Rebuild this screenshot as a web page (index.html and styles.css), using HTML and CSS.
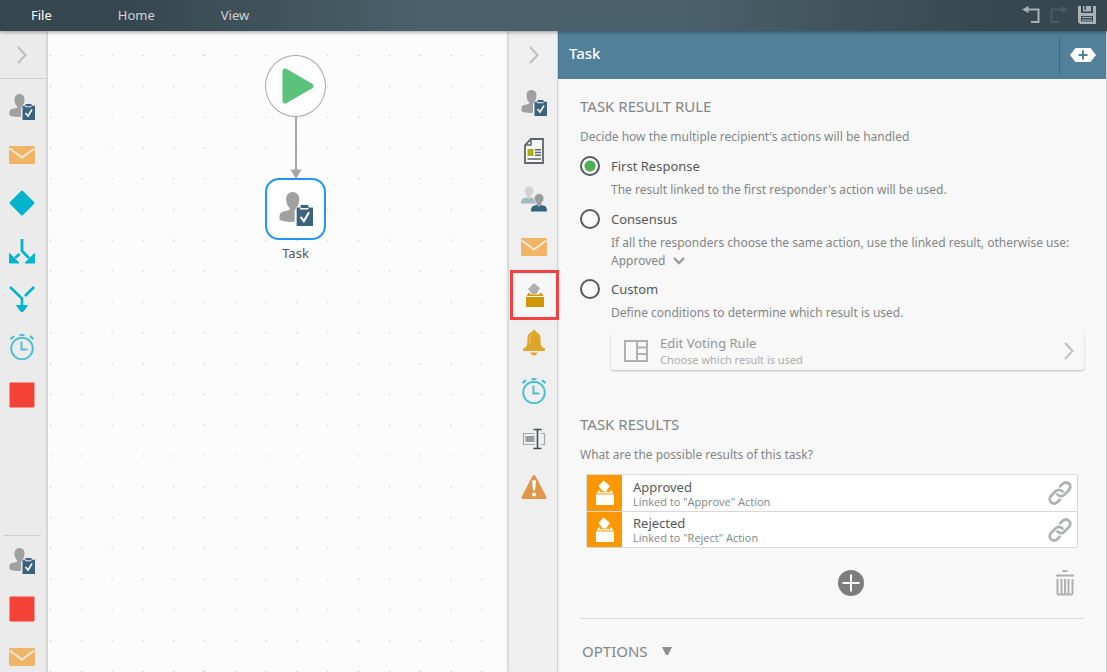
FILE: index.html
```html
<!DOCTYPE html>
<html lang="en">
<head>
    <meta charset="UTF-8">
    <meta name="viewport" content="width=device-width, initial-scale=1.0">
    <title>Workflow Designer</title>
    <link rel="stylesheet" href="styles.css">
</head>
<body>
    <!-- Shared icons -->
    <svg class="sprite" aria-hidden="true">
        <symbol id="i-chevron" viewBox="0 0 10 18">
            <path d="M1 1l7.500 8L1 17" fill="none" stroke="#bebebe" stroke-width="2"/>
        </symbol>
        <symbol id="i-task" viewBox="0 0 26 26">
            <path d="M10.500 0c3 0 5 2.200 5 5.500 0 2.800-1 5.400-2.700 6.900v1.200h-.8v9.200C7.500 23.200 3 22.600.500 21.300c-.4-3.600.1-5.400 2.300-6.200 2-.7 4.200-.9 5.400-1.700v-1C6.500 11 5.500 8.300 5.500 5.500c0-3.300 2-5.500 5-5.500z" fill="#9fa1a1"/>
            <path d="M13.500 11.800h2.500v1.500h6.500v-1.500H26V26H13.500zM16.500 10h6v2.300h-6z" fill="#3a6380"/>
            <path d="M16.500 19l2.500 3.200 4-6.700" fill="none" stroke="#fff" stroke-width="1.600"/>
        </symbol>
        <symbol id="i-mail" viewBox="0 0 26 20">
            <rect x="0" y="1" width="26" height="18" rx="1" fill="#efb465"/>
            <path d="M.5 3.500l12.500 9L25.500 3.500" fill="none" stroke="#f6ead8" stroke-width="2"/>
        </symbol>
        <symbol id="i-clock" viewBox="0 0 26 26">
            <g fill="none" stroke="#4fc0d3">
                <circle cx="13" cy="14.500" r="10.800" stroke-width="2"/>
                <path d="M12.500 7.500v8h6" stroke-width="2"/>
                <path d="M10.500 1h5" stroke-width="2"/>
                <path d="M1.500 5.200L5 2.200M24.500 5.200L21 2.200" stroke-width="2.400"/>
            </g>
        </symbol>
        <symbol id="i-stop" viewBox="0 0 26 26">
            <rect x=".5" y=".5" width="25" height="25" rx="1" fill="#f44336"/>
        </symbol>
        <symbol id="i-vote" viewBox="0 0 20 26">
            <path d="M8.500.5l6.500 5.500-3.500 4.500 1 1H8L3.500 6z" fill="#fff"/>
            <path d="M3.500 10.500L1.500 13.500h17l-2-3h-2l1 1.800H4.600l1-1.800z" fill="#fff"/>
            <rect x="1" y="14.500" width="18" height="10.500" rx=".5" fill="#fff"/>
        </symbol>
        <symbol id="i-link" viewBox="0 0 24 24">
            <g fill="none" stroke="#b0b2b2" stroke-width="2.800" stroke-linecap="round">
                <path d="M9.500 13.500a4.300 4.300 0 0 0 6.500.4l5-5a4.300 4.300 0 0 0-6.200-6.100l-2.600 2.500"/>
                <path d="M14.500 10.500a4.300 4.300 0 0 0-6.500-.4l-5 5a4.300 4.300 0 0 0 6.200 6.100l2.600-2.500"/>
            </g>
        </symbol>
    </svg>

    <header class="topbar">
        <nav class="menu">
            <a class="active" href="#">File</a>
            <a href="#">Home</a>
            <a href="#">View</a>
        </nav>
        <div class="tools">
            <button type="button" aria-label="Undo">
                <svg width="18" height="18" viewBox="0 0 18 18"><path d="M4 3.500h12.500v12.500H9" fill="none" stroke="#a9b1b5" stroke-width="2"/><path d="M0 3.500L6.500 0v7z" fill="#a9b1b5"/></svg>
            </button>
            <button type="button" aria-label="Redo" disabled>
                <svg width="18" height="18" viewBox="0 0 18 18"><path d="M14 3.500H1.500v12.500H9" fill="none" stroke="#4d5c64" stroke-width="2"/><path d="M18 3.500L11.500 0v7z" fill="#4d5c64"/></svg>
            </button>
            <button type="button" aria-label="Save">
                <svg width="18" height="18" viewBox="0 0 18 18"><path d="M0 0h3v7h12V0h3v18H2l-2-2z" fill="#a9b1b5"/><path d="M5 0h8v5.500H5z" fill="#a9b1b5"/><path d="M6.500 0h1.500v4H6.500z" fill="#39484f"/><path d="M3 10h12v5.500H3z" fill="#39484f"/><path d="M4 11.500h10M4 14h10" stroke="#a9b1b5"/></svg>
            </button>
        </div>
    </header>

    <main class="workspace">
        <!-- Step palette -->
        <aside class="rail palette">
            <button class="rail-btn collapse" type="button" aria-label="Expand"><svg width="10" height="18"><use href="#i-chevron"/></svg></button>
            <div class="palette-list">
                <button class="rail-btn" type="button" aria-label="Task"><svg width="26" height="26"><use href="#i-task"/></svg></button>
                <button class="rail-btn" type="button" aria-label="Email"><svg width="26" height="20"><use href="#i-mail"/></svg></button>
                <button class="rail-btn" type="button" aria-label="Decision">
                    <svg width="26" height="26" viewBox="0 0 26 26"><path d="M12 1q1-1 2 0l11 11q1 1 0 2L14 25q-1 1-2 0L1 14q-1-1 0-2z" fill="#00b5cc"/></svg>
                </button>
                <button class="rail-btn" type="button" aria-label="Split">
                    <svg width="26" height="26" viewBox="0 0 26 26"><path d="M13 1v12l7 7M10.500 16L6 20" fill="none" stroke="#00b5cc" stroke-width="2.800"/><path d="M.5 15.500L10 25H.5zM25.500 15.500L16 25h9.500z" fill="#00b5cc" stroke="#00b5cc" stroke-linejoin="round"/></svg>
                </button>
                <button class="rail-btn" type="button" aria-label="Merge">
                    <svg width="26" height="28" viewBox="0 0 26 28"><path d="M1 2l12 11.500V22M25 2l-9 9" fill="none" stroke="#00b5cc" stroke-width="2.600"/><path d="M7.500 20.500h11L14 26.500h-2z" fill="#00b5cc" stroke="#00b5cc" stroke-linejoin="round"/></svg>
                </button>
                <button class="rail-btn" type="button" aria-label="Timer"><svg width="26" height="26"><use href="#i-clock"/></svg></button>
                <button class="rail-btn" type="button" aria-label="End"><svg width="26" height="26"><use href="#i-stop"/></svg></button>
            </div>
            <div class="palette-recent">
                <button class="rail-btn" type="button" aria-label="Recent task"><svg width="26" height="26"><use href="#i-task"/></svg></button>
                <button class="rail-btn" type="button" aria-label="Recent end"><svg width="26" height="26"><use href="#i-stop"/></svg></button>
                <button class="rail-btn" type="button" aria-label="Recent email"><svg width="26" height="20"><use href="#i-mail"/></svg></button>
            </div>
        </aside>

        <!-- Diagram -->
        <section class="canvas">
            <svg class="grid" aria-hidden="true">
                <defs>
                    <pattern id="dots" width="40" height="40" patternUnits="userSpaceOnUse" patternTransform="translate(2 24) scale(.77)">
                        <rect width="1.500" height="1.500" fill="#bdbdbd"/>
                    </pattern>
                </defs>
                <rect width="100%" height="100%" fill="url(#dots)"/>
            </svg>
            <div class="node start">
                <svg width="32" height="36" viewBox="0 0 32 36"><path d="M3 3v30L29 18z" fill="#5bc27c" stroke="#5bc27c" stroke-width="5" stroke-linejoin="round"/></svg>
            </div>
            <svg class="arrow" width="12" height="62" viewBox="0 0 12 62"><path d="M6 0v54" stroke="#a6a6a6" stroke-width="2"/><path d="M.5 52.500h11L6 62z" fill="#a6a6a6"/></svg>
            <div class="node task">
                <svg width="34" height="36" viewBox="0 0 26 26"><use href="#i-task" width="26" height="26"/></svg>
            </div>
            <div class="node-label">Task</div>
        </section>

        <!-- Property tabs -->
        <aside class="rail tabs">
            <button class="rail-btn" type="button" aria-label="Collapse"><svg width="10" height="18"><use href="#i-chevron"/></svg></button>
            <button class="rail-btn" type="button" aria-label="General"><svg width="26" height="26"><use href="#i-task"/></svg></button>
            <button class="rail-btn" type="button" aria-label="Form">
                <svg width="20" height="26" viewBox="0 0 20 26"><path d="M7 1h12v24H1V7z" fill="#fafafa" stroke="#5e6668" stroke-width="1.800"/><path d="M7 1v6H1" fill="none" stroke="#5e6668" stroke-width="1.500"/><rect x="3.500" y="11" width="6" height="7" fill="#b0ad1c"/><path d="M11 11.800h6M11 14.500h6M11 17.200h6M3.500 21h13.500" stroke="#5e6668" stroke-width="1.600"/></svg>
            </button>
            <button class="rail-btn" type="button" aria-label="Recipients">
                <svg width="26" height="26" viewBox="0 0 26 26"><circle cx="8" cy="5" r="4.500" fill="#cfd1d1"/><path d="M5.500 7h5l-1 5h-3z" fill="#cfd1d1"/><path d="M0 17.500c0-4 1-5 6-6l2 1.500 2-1.500c4 .8 5 2 5 6z" fill="#9dbac9"/><circle cx="18" cy="12.500" r="5" fill="#9a9c9c" stroke="#eee"/><path d="M15 14h6l-1 6h-4z" fill="#9a9c9c"/><path d="M10 25.500c0-4.500 1-5.500 5.500-6.500l2.500 1.800 2.500-1.800c4.500 1 5.500 2 5.500 6.500z" fill="#33627f"/></svg>
            </button>
            <button class="rail-btn" type="button" aria-label="Email"><svg width="26" height="20"><use href="#i-mail"/></svg></button>
            <button class="rail-btn selected" type="button" aria-label="Task result rule">
                <svg width="20" height="26" viewBox="0 0 20 26"><path d="M9 1l6 5-3.500 6H7L3 7z" fill="#b0b0b0"/><path d="M3.500 11L1.500 14h17l-2-3h-2l1 1.600H4.600l1-1.600z" fill="#cf9700"/><rect x="1" y="15" width="18" height="10" fill="#cf9700"/></svg>
            </button>
            <button class="rail-btn" type="button" aria-label="Notifications">
                <svg width="22" height="26" viewBox="0 0 22 26"><path d="M11 0c1.200 0 2 .8 2 2 3.500.8 4.500 3.500 4.500 7 0 5 .5 7 2.500 9H2C4 16 4.500 14 4.500 9c0-3.500 1-6.200 4.500-7 0-1.200.8-2 2-2z" fill="#dea52c"/><path d="M8.500 4.500C7 6 6.800 8 6.700 13" fill="none" stroke="#f0cf85"/><rect y="18" width="22" height="3" rx="1" fill="#dea52c"/><path d="M7.500 22.500h7c-.5 2-1.800 3-3.500 3s-3-1-3.500-3z" fill="#dea52c"/></svg>
            </button>
            <button class="rail-btn" type="button" aria-label="Deadline"><svg width="26" height="26"><use href="#i-clock"/></svg></button>
            <button class="rail-btn" type="button" aria-label="Rename">
                <svg width="24" height="22" viewBox="0 0 24 22"><path d="M12.500 5.500H1.500v11h11M19 5.500h3.500v11H19" fill="none" stroke="#a5a7a8" stroke-width="1.200"/><rect x="3.500" y="8" width="9" height="6" fill="#9b9d9e"/><path d="M15.500 1.500v19M11.500 1.500h8M11.500 20.500h8" stroke="#454c50" stroke-width="1.600"/></svg>
            </button>
            <button class="rail-btn" type="button" aria-label="Error handling">
                <svg width="26" height="26" viewBox="0 0 26 26"><path d="M13 2.500L24 23.500H2z" fill="#df9648" stroke="#df9648" stroke-width="3" stroke-linejoin="round"/><path d="M11 6.500h4l-1 10h-2z" fill="#fff"/><circle cx="13" cy="20.500" r="2" fill="#fff"/></svg>
            </button>
        </aside>

        <!-- Property panel -->
        <section class="panel">
            <header class="panel-header">
                <h1>Task</h1>
                <button type="button" aria-label="Add">
                    <svg width="26" height="14" viewBox="0 0 26 14"><path d="M5.500 0h15L26 7l-5.500 7h-15L0 7z" fill="#fff"/><path d="M13 2.500v9M8.500 7h9" stroke="#51809a" stroke-width="2"/></svg>
                </button>
            </header>

            <div class="panel-body">
                <h2>TASK RESULT RULE</h2>
                <p class="hint">Decide how the multiple recipient's actions will be handled</p>

                <form class="rules">
                    <div class="rule">
                        <label for="first"><input type="radio" id="first" name="rule" checked>First Response</label>
                        <p>The result linked to the first responder's action will be used.</p>
                    </div>
                    <div class="rule">
                        <label for="consensus"><input type="radio" id="consensus" name="rule">Consensus</label>
                        <p><span id="fallback-label">If all the responders choose the same action, use the linked result, otherwise use:</span></p>
                        <div class="fallback">
                            <select aria-labelledby="fallback-label">
                                <option>Approved</option>
                                <option>Rejected</option>
                            </select>
                            <svg width="12" height="8" viewBox="0 0 12 8"><path d="M1 1l5 5 5-5" fill="none" stroke="#9a9c9c" stroke-width="2.400"/></svg>
                        </div>
                    </div>
                    <div class="rule">
                        <label for="custom"><input type="radio" id="custom" name="rule">Custom</label>
                        <p>Define conditions to determine which result is used.</p>
                    </div>
                    <button class="voting" type="button">
                        <svg width="24" height="22" viewBox="0 0 24 22"><path d="M1 1h22v20H1zM13 1v20M13 7.500h10M13 14h10" fill="none" stroke="#b0b0b0" stroke-width="2"/></svg>
                        <span class="voting-text">
                            <span class="voting-title">Edit Voting Rule</span>
                            <span class="voting-sub">Choose which result is used</span>
                        </span>
                        <svg width="10" height="18"><use href="#i-chevron"/></svg>
                    </button>
                </form>

                <h2>TASK RESULTS</h2>
                <p class="hint">What are the possible results of this task?</p>

                <ul class="results">
                    <li>
                        <span class="badge"><svg width="20" height="26"><use href="#i-vote"/></svg></span>
                        <span class="result-text">
                            <span class="result-name">Approved</span>
                            <span class="result-link">Linked to "Approve" Action</span>
                        </span>
                        <svg width="24" height="24"><use href="#i-link"/></svg>
                    </li>
                    <li>
                        <span class="badge"><svg width="20" height="26"><use href="#i-vote"/></svg></span>
                        <span class="result-text">
                            <span class="result-name">Rejected</span>
                            <span class="result-link">Linked to "Reject" Action</span>
                        </span>
                        <svg width="24" height="24"><use href="#i-link"/></svg>
                    </li>
                </ul>

                <div class="actions">
                    <button type="button" aria-label="Add result">
                        <svg width="26" height="26" viewBox="0 0 26 26"><circle cx="13" cy="13" r="13" fill="#7d7d7d"/><path d="M13 4.500v17M4.500 13h17" stroke="#fff" stroke-width="2"/></svg>
                    </button>
                    <button class="delete" type="button" aria-label="Delete result">
                        <svg width="18" height="26" viewBox="0 0 18 26"><path d="M6.500 1h5M0 5.500h18" stroke="#b0b0b0" stroke-width="2.200"/><path d="M1.500 9v14q0 1.500 1.500 1.500h12q1.500 0 1.500-1.500V9M5.500 9v15M9 9v15M12.500 9v15" fill="none" stroke="#b0b0b0" stroke-width="2"/></svg>
                    </button>
                </div>

                <button class="options" type="button">OPTIONS
                    <svg width="10" height="8" viewBox="0 0 10 8"><path d="M0 0h10L6 8H4z" fill="#8a9090"/></svg>
                </button>
            </div>
        </section>
    </main>
</body>
</html>
```

FILE: styles.css
```css
* {
    box-sizing: border-box;
}
body {
    margin: 0;
    height: 100vh;
    display: flex;
    flex-direction: column;
    overflow: hidden;
    font-family: "Noto Sans", "Open Sans", sans-serif;
    font-size: 12px;
    color: #828686;
    background-color: #f8f8f8;
}
h1, h2, p, ul {
    margin: 0;
    padding: 0;
    font-weight: normal;
}
button {
    padding: 0;
    border: none;
    background: none;
    font: inherit;
    color: inherit;
    cursor: pointer;
}
svg {
    display: block;
    flex-shrink: 0;
}
.sprite {
    position: absolute;
    width: 0;
    height: 0;
}

/* Top bar */
.topbar {
    flex: 0 0 31px;
    display: flex;
    justify-content: space-between;
    align-items: center;
    padding: 0 11px 2px 31px;
    background: linear-gradient(to right, #37474f 12%, #4a606a 38%, #4a606a 62%, #37474f 90%);
    box-shadow: 0 1px 4px rgba(0, 0, 0, 0.4);
    z-index: 2;
}
.menu {
    display: flex;
    gap: 66px;
    font-size: 13px;
}
.menu a {
    color: #cfd4d7;
    text-decoration: none;
}
.menu .active {
    color: #fff;
}
.tools {
    display: flex;
    gap: 10px;
}

.workspace {
    flex: 1;
    min-height: 0;
    display: flex;
}

/* Icon rails */
.rail {
    display: flex;
    flex-direction: column;
    background-color: #ebebeb;
}
.rail-btn {
    flex: 0 0 48px;
    display: flex;
    align-items: center;
    justify-content: center;
}
.palette {
    flex: 0 0 48px;
    border-right: 2px solid #d6d6d6;
    justify-content: space-between;
}
.palette .rail-btn {
    padding-right: 2px;
}
.collapse {
    border-bottom: 1px solid #cfcfcf;
}
.palette-list {
    flex: 1;
    display: flex;
    flex-direction: column;
    padding-top: 4px;
}
.palette-recent {
    flex: 0 0 137px;
    display: flex;
    flex-direction: column;
    margin: 0 5px 0 4px;
    padding-top: 1px;
    border-top: 1px solid #cfcfcf;
    overflow: hidden;
}
.tabs {
    flex: 0 0 49px;
    padding-left: 2px;
    background-color: #efefef;
    border-right: 1px solid #d0d0d0;
    box-shadow: -1px 0 3px rgba(0, 0, 0, 0.25);
    z-index: 1;
}
.selected {
    margin-right: -1px;
    background-color: #f7f7f7;
    outline: 3px solid #f44141;
    outline-offset: -2px;
    z-index: 1;
}

/* Diagram */
.canvas {
    flex: 1;
    position: relative;
    background-color: #fcfcfc;
}
.grid {
    width: 100%;
    height: 100%;
}
.node {
    position: absolute;
    left: 217px;
    width: 61px;
    height: 62px;
    display: flex;
    align-items: center;
    justify-content: center;
    background-color: #fff;
}
.start {
    top: 24px;
    border: 1px solid #a6a6a6;
    border-radius: 50%;
}
.start svg {
    margin-left: 4px;
}
.arrow {
    position: absolute;
    left: 242px;
    top: 86px;
}
.task {
    top: 147px;
    border: 2px solid #2196f3;
    border-radius: 14px;
}
.node-label {
    position: absolute;
    left: 217px;
    top: 213px;
    width: 61px;
    text-align: center;
    color: #555;
    font-size: 13px;
}

/* Property panel */
.panel {
    flex: 0 0 549px;
    border-right: 1px solid #d0d0d0;
    background-color: #f8f8f8;
}
.panel-header {
    height: 48px;
    display: flex;
    align-items: center;
    justify-content: space-between;
    padding-left: 11px;
    background-color: #51809a;
    color: #fff;
}
.panel-header h1 {
    padding-bottom: 5px;
    font-size: 15px;
    font-weight: 500;
}
.panel-header button {
    height: 37px;
    padding: 0 10px;
    border-left: 1px solid #38657f;
}
.panel-body {
    padding: 17px 22px 0;
}
h2 {
    font-size: 15px;
    line-height: 20px;
}
.hint {
    margin-top: 12px;
    line-height: 18px;
}
.rules {
    padding-top: 10px;
    margin-bottom: 44px;
}
.rule {
    margin-bottom: 10px;
}
.rule label {
    display: flex;
    align-items: center;
    gap: 11px;
    font-size: 13px;
    line-height: 20px;
    color: #56595a;
}
.rule input {
    appearance: none;
    width: 20px;
    height: 20px;
    margin: 0;
    border: 2px solid #56595c;
    border-radius: 50%;
    background-color: #fbfbfb;
}
.rule input:checked {
    background: radial-gradient(circle, #4caf50 5px, #fbfbfb 6px);
}
.rule p {
    margin: 5px 0 0 31px;
    line-height: 18px;
}
.fallback {
    display: flex;
    align-items: center;
    gap: 7px;
    margin-left: 31px;
}
.fallback select {
    appearance: none;
    padding: 0;
    border: none;
    background: none;
    font: inherit;
    line-height: 17px;
    color: inherit;
}
.voting {
    width: calc(100% - 31px);
    height: 38px;
    display: flex;
    align-items: center;
    margin-left: 31px;
    padding: 0 10px 0 13px;
    border-radius: 3px;
    box-shadow: 0 1px 2px rgba(0, 0, 0, 0.25);
    text-align: left;
}
.voting-text {
    flex: 1;
    display: flex;
    flex-direction: column;
    padding-left: 12px;
}
.voting-title {
    font-size: 13px;
    line-height: 17px;
    color: #939696;
}
.voting-sub {
    font-size: 11px;
    line-height: 16px;
    color: #acaeae;
}
.results {
    margin: 10px 6px 0;
    border: 1px solid #d8d8d8;
    border-radius: 2px;
    background-color: #fff;
    list-style: none;
}
.results li {
    height: 36px;
    display: flex;
    align-items: center;
    padding-right: 5px;
}
.results li + li {
    border-top: 1px solid #d8d8d8;
}
.badge {
    align-self: stretch;
    width: 35px;
    display: flex;
    align-items: center;
    justify-content: center;
    background-color: #ff9800;
}
.result-text {
    flex: 1;
    display: flex;
    flex-direction: column;
    padding-left: 11px;
}
.result-name {
    font-size: 13px;
    line-height: 16px;
    color: #56595a;
}
.result-link {
    font-family: "Open Sans", "Noto Sans", sans-serif;
    font-size: 11px;
    line-height: 13px;
}
.actions {
    height: 71px;
    display: grid;
    grid-template-columns: 1fr auto 1fr;
    align-items: center;
    padding: 0 10px 0 48px;
    border-bottom: 1px solid #dcdcdc;
}
.actions button {
    grid-column: 2;
}
.actions .delete {
    grid-column: 3;
    justify-self: end;
}
.options {
    display: flex;
    align-items: center;
    gap: 14px;
    margin-top: 22px;
    padding-left: 2px;
    font-size: 15px;
    line-height: 20px;
}
```
